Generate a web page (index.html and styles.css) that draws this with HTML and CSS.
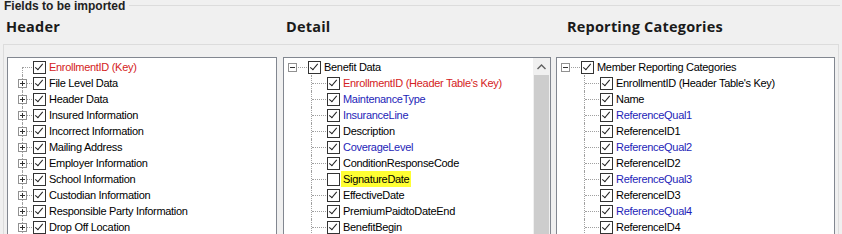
FILE: index.html
```html
<!DOCTYPE html>
<html>

<head>
    <meta charset="utf-8">
    <title>Fields to be imported</title>
    <link rel="stylesheet" href="styles.css">
</head>

<body>
    <div class="group">
        <div class="group-head">
            <span class="group-title">Fields to be imported</span>
            <span class="group-rule"></span>
        </div>

        <div class="titles">
            <h2 class="col-title t-header">Header</h2>
            <h2 class="col-title t-detail">Detail</h2>
            <h2 class="col-title t-report">Reporting Categories</h2>
        </div>

        <div class="panel">
            <!-- header tree -->
            <div class="tree-box box-header">
                <div class="tree tree-h">
                    <div class="node"><span class="twig first"></span><span class="cb on"></span><span class="lbl red">EnrollmentID (Key)</span></div>
                    <div class="node"><span class="twig"><span class="exp plus"></span></span><span class="cb on"></span><span class="lbl">File Level Data</span></div>
                    <div class="node"><span class="twig"><span class="exp plus"></span></span><span class="cb on"></span><span class="lbl">Header Data</span></div>
                    <div class="node"><span class="twig"><span class="exp plus"></span></span><span class="cb on"></span><span class="lbl">Insured Information</span></div>
                    <div class="node"><span class="twig"><span class="exp plus"></span></span><span class="cb on"></span><span class="lbl">Incorrect Information</span></div>
                    <div class="node"><span class="twig"><span class="exp plus"></span></span><span class="cb on"></span><span class="lbl">Mailing Address</span></div>
                    <div class="node"><span class="twig"><span class="exp plus"></span></span><span class="cb on"></span><span class="lbl">Employer Information</span></div>
                    <div class="node"><span class="twig"><span class="exp plus"></span></span><span class="cb on"></span><span class="lbl">School Information</span></div>
                    <div class="node"><span class="twig"><span class="exp plus"></span></span><span class="cb on"></span><span class="lbl">Custodian Information</span></div>
                    <div class="node"><span class="twig"><span class="exp plus"></span></span><span class="cb on"></span><span class="lbl">Responsible Party Information</span></div>
                    <div class="node"><span class="twig"><span class="exp plus"></span></span><span class="cb on"></span><span class="lbl">Drop Off Location</span></div>
                </div>
            </div>

            <!-- detail tree -->
            <div class="tree-box box-detail">
                <div class="tree">
                    <div class="node"><span class="twig root"><span class="exp"></span></span><span class="cb on"></span><span class="lbl">Benefit Data</span></div>
                    <div class="node child"><span class="twig"></span><span class="cb on"></span><span class="lbl red">EnrollmentID (Header Table's Key)</span></div>
                    <div class="node child"><span class="twig"></span><span class="cb on"></span><span class="lbl blue">MaintenanceType</span></div>
                    <div class="node child"><span class="twig"></span><span class="cb on"></span><span class="lbl blue">InsuranceLine</span></div>
                    <div class="node child"><span class="twig"></span><span class="cb on"></span><span class="lbl">Description</span></div>
                    <div class="node child"><span class="twig"></span><span class="cb on"></span><span class="lbl blue">CoverageLevel</span></div>
                    <div class="node child"><span class="twig"></span><span class="cb on"></span><span class="lbl">ConditionResponseCode</span></div>
                    <div class="node child"><span class="twig"></span><span class="cb"></span><span class="lbl hl">SignatureDate</span></div>
                    <div class="node child"><span class="twig"></span><span class="cb on"></span><span class="lbl">EffectiveDate</span></div>
                    <div class="node child"><span class="twig"></span><span class="cb on"></span><span class="lbl">PremiumPaidtoDateEnd</span></div>
                    <div class="node child"><span class="twig"></span><span class="cb on"></span><span class="lbl">BenefitBegin</span></div>
                </div>
                <div class="vscroll">
                    <span class="arrow-up">
                        <svg width="9" height="6" viewBox="0 0 9 6"><path d="M0.5 5 L4.5 1 L8.5 5" fill="none" stroke="#606060" stroke-width="1.4"/></svg>
                    </span>
                    <span class="thumb"></span>
                </div>
            </div>

            <!-- reporting categories tree -->
            <div class="tree-box box-report">
                <div class="tree">
                    <div class="node"><span class="twig root"><span class="exp"></span></span><span class="cb on"></span><span class="lbl">Member Reporting Categories</span></div>
                    <div class="node child"><span class="twig"></span><span class="cb on"></span><span class="lbl">EnrollmentID (Header Table's Key)</span></div>
                    <div class="node child"><span class="twig"></span><span class="cb on"></span><span class="lbl">Name</span></div>
                    <div class="node child"><span class="twig"></span><span class="cb on"></span><span class="lbl blue">ReferenceQual1</span></div>
                    <div class="node child"><span class="twig"></span><span class="cb on"></span><span class="lbl">ReferenceID1</span></div>
                    <div class="node child"><span class="twig"></span><span class="cb on"></span><span class="lbl blue">ReferenceQual2</span></div>
                    <div class="node child"><span class="twig"></span><span class="cb on"></span><span class="lbl">ReferenceID2</span></div>
                    <div class="node child"><span class="twig"></span><span class="cb on"></span><span class="lbl blue">ReferenceQual3</span></div>
                    <div class="node child"><span class="twig"></span><span class="cb on"></span><span class="lbl">ReferenceID3</span></div>
                    <div class="node child"><span class="twig"></span><span class="cb on"></span><span class="lbl blue">ReferenceQual4</span></div>
                    <div class="node child"><span class="twig"></span><span class="cb on"></span><span class="lbl">ReferenceID4</span></div>
                </div>
            </div>
        </div>
    </div>
</body>

</html>
```

FILE: styles.css
```css
html,
body {
    margin: 0;
    height: 234px;
    overflow: hidden;
    background-color: #f0f0f0;
    font-family: "Liberation Sans", Arial, sans-serif;
    color: #000;
}

.group {
    width: 840px;
}

.group-head {
    display: flex;
    height: 14px;
    margin-top: -1px;
}

.group-title {
    padding: 0 4px;
    font-size: 12px;
    line-height: 14px;
    font-weight: bold;
    color: #222;
}

.group-rule {
    flex: 1;
    align-self: flex-start;
    margin-top: 6px;
    border-top: 1px solid #dcdcdc;
}

.titles {
    display: flex;
    height: 31px;
    padding-left: 6px;
}

.col-title {
    margin: 0;
    padding-top: 4px;
    font-family: "Open Sans", "Liberation Sans", sans-serif;
    font-size: 14.5px;
    font-weight: 700;
    line-height: 20px;
    letter-spacing: 0.2px;
    color: #1a1a1a;
}

.t-header {
    width: 280px;
}

.t-detail {
    width: 281px;
}

.panel {
    display: flex;
    width: 836px;
    margin-left: 3px;
    box-sizing: border-box;
    padding: 12px 3px 0 3px;
    border: 1px solid #dcdcdc;
    border-bottom: none;
}

.tree-box {
    box-sizing: border-box;
    height: 190px;
    border: 1px solid #828790;
    background-color: #fff;
    overflow: hidden;
}

.box-header {
    width: 270px;
    margin-right: 6px;
}

.box-detail {
    display: flex;
    width: 268px;
    margin-right: 5px;
}

.box-report {
    width: 279px;
}

.tree {
    flex: 1;
    padding-top: 1px;
}

.node {
    display: flex;
    align-items: center;
    height: 16px;
    white-space: nowrap;
}

.node.child {
    padding-left: 19px;
}

.twig {
    position: relative;
    flex: none;
    width: 24px;
    height: 16px;
}

.twig::before {
    content: "";
    position: absolute;
    left: 8px;
    top: 0;
    bottom: 0;
    border-left: 1px dotted #a0a0a0;
}

.twig::after {
    content: "";
    position: absolute;
    left: 9px;
    right: 1px;
    top: 8px;
    border-top: 1px dotted #a0a0a0;
}

.twig.first::before {
    top: 8px;
}

.twig.root::before {
    display: none;
}

.tree-h .twig {
    width: 25px;
}

.tree-h .twig::before {
    left: 14px;
}

.tree-h .twig::after {
    left: 15px;
}

.exp {
    position: absolute;
    left: 4px;
    top: 4px;
    z-index: 1;
    width: 9px;
    height: 9px;
    box-sizing: border-box;
    border: 1px solid #919191;
    background-color: #fff;
}

.tree-h .exp {
    left: 10px;
}

.exp::before {
    content: "";
    position: absolute;
    left: 1px;
    right: 1px;
    top: 3px;
    height: 1px;
    background-color: #333;
}

.exp.plus::after {
    content: "";
    position: absolute;
    left: 3px;
    top: 1px;
    bottom: 1px;
    width: 1px;
    background-color: #333;
}

.cb {
    position: relative;
    flex: none;
    width: 13px;
    height: 13px;
    box-sizing: border-box;
    border: 1px solid #333;
    background-color: #fff;
}

.cb.on::after {
    content: "";
    position: absolute;
    left: 3px;
    top: 0;
    width: 3px;
    height: 7px;
    border: solid #1e1e1e;
    border-width: 0 1px 1px 0;
    transform: rotate(40deg);
}

.lbl {
    margin-left: 2px;
    padding: 0 1px;
    font-size: 11px;
    line-height: 16px;
    letter-spacing: -0.3px;
}

.red {
    color: #d42222;
}

.blue {
    color: #1e1eb8;
}

.hl {
    margin-left: 1px;
    padding: 0 2px;
    background-color: #ffff33;
}

.vscroll {
    display: flex;
    flex-direction: column;
    flex: none;
    width: 17px;
    background-color: #f0f0f0;
}

.arrow-up {
    display: flex;
    align-items: center;
    justify-content: center;
    height: 17px;
}

.thumb {
    flex: 1;
    margin: 0 1px;
    background-color: #cdcdcd;
}
```
